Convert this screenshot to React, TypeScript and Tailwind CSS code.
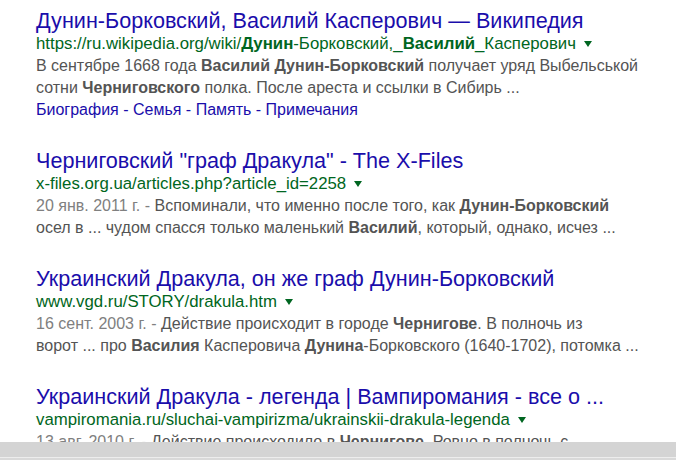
import React from "react";

const Arrow = () => (
  <span className="inline-block ml-[8px] align-middle relative top-[-1px] w-0 h-0 border-l-[4.5px] border-r-[4.5px] border-t-[6px] border-l-transparent border-r-transparent border-t-[#006621]" />
);

type Seg = { t: string; b?: boolean };

const Snip = ({ segs }: { segs: Seg[] }) => (
  <>
    {segs.map((s, i) =>
      s.b ? (
        <b key={i} className="font-bold">
          {s.t}
        </b>
      ) : (
        <span key={i}>{s.t}</span>
      )
    )}
  </>
);

type Result = {
  title: string;
  url: Seg[];
  lines: Seg[][];
  date?: string;
  sitelinks?: string[];
};

const results: Result[] = [
  {
    title: "Дунин-Борковский, Василий Касперович — Википедия",
    url: [
      { t: "https://ru.wikipedia.org/wiki/" },
      { t: "Дунин", b: true },
      { t: "-Борковский,_" },
      { t: "Василий", b: true },
      { t: "_Касперович" },
    ],
    lines: [
      [
        { t: "В сентябре 1668 года " },
        { t: "Василий Дунин-Борковский", b: true },
        { t: " получает уряд Выбельськой" },
      ],
      [
        { t: "сотни " },
        { t: "Черниговского", b: true },
        { t: " полка. После ареста и ссылки в Сибирь ..." },
      ],
    ],
    sitelinks: ["Биография", "Семья", "Память", "Примечания"],
  },
  {
    title: "Черниговский \"граф Дракула\" - The X-Files",
    url: [{ t: "x-files.org.ua/articles.php?article_id=2258" }],
    date: "20 янв. 2011 г. - ",
    lines: [
      [
        { t: "Вспоминали, что именно после того, как " },
        { t: "Дунин-Борковский", b: true },
      ],
      [
        { t: "осел в ... чудом спасся только маленький " },
        { t: "Василий", b: true },
        { t: ", который, однако, исчез ..." },
      ],
    ],
  },
  {
    title: "Украинский Дракула, он же граф Дунин-Борковский",
    url: [{ t: "www.vgd.ru/STORY/drakula.htm" }],
    date: "16 сент. 2003 г. - ",
    lines: [
      [
        { t: "Действие происходит в городе " },
        { t: "Чернигове", b: true },
        { t: ". В полночь из" },
      ],
      [
        { t: "ворот ... про " },
        { t: "Василия", b: true },
        { t: " Касперовича " },
        { t: "Дунина", b: true },
        { t: "-Борковского (1640-1702), потомка ..." },
      ],
    ],
  },
  {
    title: "Украинский Дракула - легенда | Вампиромания - все о ...",
    url: [{ t: "vampiromania.ru/sluchai-vampirizma/ukrainskii-drakula-legenda" }],
    date: "13 авг. 2010 г. - ",
    lines: [
      [
        { t: "Действие происходило в " },
        { t: "Чернигове", b: true },
        { t: ". Ровно в полночь с" },
      ],
    ],
  },
];

export default function App() {
  return (
    <div
      className="w-[676px] h-[460px] flex flex-col bg-white overflow-hidden"
      style={{ fontFamily: '"Liberation Sans", Arial, sans-serif' }}
    >
      <div className="flex-1 min-h-0 overflow-hidden pl-[36px] pt-[8px] flex flex-col gap-[27px]">
        {results.map((r, i) => (
          <div key={i} className="flex flex-col">
            <div className="text-[21.6px] leading-[25px] text-[#1a0dab] whitespace-nowrap">{r.title}</div>
            <div className="text-[16.8px] leading-[22px] text-[#006621] whitespace-nowrap">
              <Snip segs={r.url} />
              <Arrow />
            </div>
            <div className="text-[16px] leading-[22px] text-[#545454] whitespace-nowrap">
              {r.lines.map((l, j) => (
                <div key={j}>
                  {j === 0 && r.date && <span className="text-[#808080]">{r.date}</span>}
                  <Snip segs={l} />
                </div>
              ))}
            </div>
            {r.sitelinks && (
              <div className="text-[16px] leading-[22px] text-[#1a0dab] whitespace-nowrap">
                {r.sitelinks.map((s, k) => (
                  <span key={k}>
                    {k > 0 && <span> - </span>}
                    {s}
                  </span>
                ))}
              </div>
            )}
          </div>
        ))}
      </div>
      <div className="h-[18px] shrink-0 flex flex-col">
        <div className="h-[15px] bg-[#d4d4d4]" />
        <div className="h-[1px] bg-[#ededed]" />
        <div className="flex-1 bg-[#d9d9d9]" />
      </div>
    </div>
  );
}
